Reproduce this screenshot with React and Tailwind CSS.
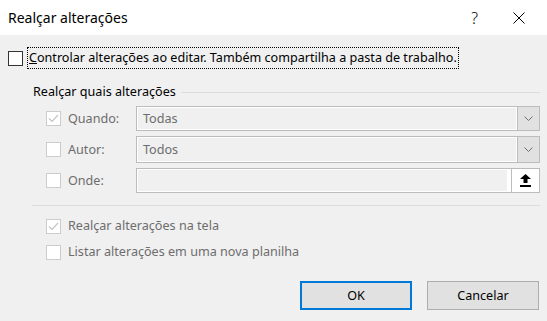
import React from 'react'

const Check = ({ checked, disabled }) => (
    <div
        className={`flex h-[15px] w-[15px] shrink-0 items-center justify-center border bg-white ${
            disabled ? 'border-[#cccccc]' : 'border-[#333333]'
        }`}
    >
        {checked && (
            <svg width="11" height="9" viewBox="0 0 11 9">
                <path d="M1 4.5 L4 7.5 L10 1" fill="none" stroke={disabled ? '#c4c4c4' : '#333'} strokeWidth="1.2" />
            </svg>
        )}
    </div>
)

const Chevron = () => (
    <svg width="9" height="5" viewBox="0 0 9 5">
        <path d="M0.5 0.5 L4.5 4.5 L8.5 0.5" fill="none" stroke="#707070" strokeWidth="1" />
    </svg>
)

const Combo = ({ value, tall }) => (
    <div className={`flex w-[404px] border border-[#bcbcbc] bg-[#f0f0f0] ${tall ? 'h-[27px]' : 'h-[25px]'}`}>
        <div className="flex flex-1 items-center border border-white pl-[5px] text-[#6d6d6d]">{value}</div>
        <div className="flex w-[22px] items-center justify-center border-l border-[#bcbcbc] bg-[#e1e1e1]">
            <Chevron />
        </div>
    </div>
)

const Row = ({ label, checked, children }) => (
    <div className="flex items-center">
        <div className="ml-[46px] flex w-[90px] items-center gap-[7px] text-[#6d6d6d]">
            <Check checked={checked} disabled />
            <span>{label}</span>
        </div>
        {children}
    </div>
)

export default function App() {
    return (
        <div
            className="flex h-[321px] w-[547px] flex-col bg-[#f0f0f0] text-[12.6px] leading-[16px] text-black"
            style={{ fontFamily: '"Noto Sans", "Open Sans", sans-serif' }}
        >
            <div className="flex h-[35px] shrink-0 items-center bg-white pl-[8px]">
                <span className="flex-1 text-[14px]">Realçar alterações</span>
                <span className="mr-[35px] text-[16px] font-light">?</span>
                <svg width="12" height="12" viewBox="0 0 12 12" className="mr-[22px]">
                    <path d="M0.5 0.5 L11.5 11.5 M11.5 0.5 L0.5 11.5" stroke="#000" strokeWidth="1" />
                </svg>
            </div>

            <div className="mt-[12px] flex items-center pl-[8px]">
                <Check />
                <span className="ml-[4px] border border-dotted border-black px-[1px] py-[2px]">
                    <span className="underline">C</span>ontrolar alterações ao editar. Também compartilha a pasta de
                    trabalho.
                </span>
            </div>

            <div className="mt-[15px] flex items-center pl-[33px] pr-[7px]">
                <span>Realçar quais alterações</span>
                <div className="ml-[5px] h-px flex-1 bg-[#dcdcdc]" />
            </div>

            <div className="mt-[6px] flex flex-col gap-[5px]">
                <Row label="Quando:" checked>
                    <Combo value="Todas" />
                </Row>
                <Row label="Autor:">
                    <Combo value="Todos" tall />
                </Row>
                <Row label="Onde:">
                    <div className="flex h-[25px] w-[404px] border border-[#bcbcbc] bg-white">
                        <div className="my-px ml-px w-[369px] bg-[#f0f0f0]" />
                        <div className="ml-auto flex w-[28px] items-center justify-center border-l border-[#bcbcbc] bg-white">
                            <svg width="11" height="13" viewBox="0 0 11 13">
                                <path d="M5.5 0 L11 5 L7.5 5 L7.5 9 L3.5 9 L3.5 5 L0 5 Z" fill="#000" />
                                <rect x="0" y="11" width="11" height="2" fill="#000" />
                            </svg>
                        </div>
                    </div>
                </Row>
            </div>

            <div className="ml-[32px] mr-[7px] mt-[12px] h-px bg-[#dcdcdc]" />

            <div className="mt-[12px] flex flex-col gap-[10px] pl-[46px] text-[#6d6d6d]">
                <div className="flex items-center gap-[7px]">
                    <Check checked disabled />
                    <span>Realçar alterações na tela</span>
                </div>
                <div className="flex items-center gap-[7px]">
                    <Check disabled />
                    <span>Listar alterações em uma nova planilha</span>
                </div>
            </div>

            <div className="mt-[21px] flex justify-end gap-[15px] pr-[8px]">
                <button className="h-[29px] w-[112px] border-2 border-[#0078d7] bg-[#e1e1e1]">OK</button>
                <button className="h-[29px] w-[112px] border border-[#adadad] bg-[#e1e1e1]">Cancelar</button>
            </div>
        </div>
    )
}
